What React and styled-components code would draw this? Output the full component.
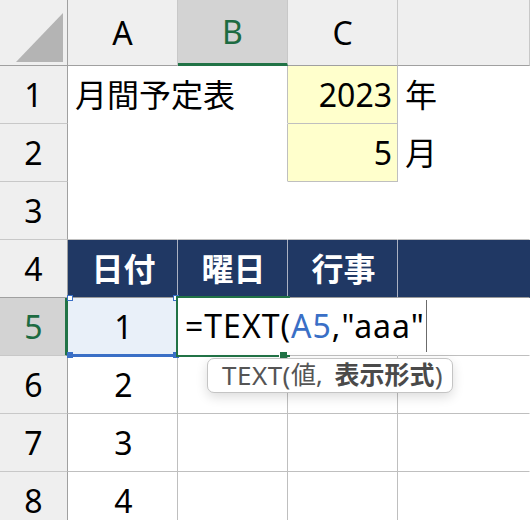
import React from 'react'
import styled, { createGlobalStyle } from 'styled-components'

const GREEN = '#217346'
const NAVY = '#203864'
const GRID = '#bfbfbf'
const HEAD_EDGE = '#a0a0a0'
const HEAD_LINE = '#c8c8c8'
const BLUE = '#3a6fc6'

const GlobalStyle = createGlobalStyle`
  html, body {
    margin: 0;
    padding: 0;
    background: #fff;
    overflow: hidden;
  }
  body {
    font-family: "Noto Sans", "Noto Sans CJK JP", sans-serif;
    color: #000;
  }
`

const Sheet = styled.div`
  display: grid;
  grid-template-columns: 68px 110px 110px 110px 1fr;
  grid-template-rows: 66px;
  grid-auto-rows: 58px;
  width: 530px;
  height: 520px;
  overflow: hidden;
`

const Corner = styled.div`
  background: #efefef;
  border-right: 1px solid ${HEAD_EDGE};
  border-bottom: 1px solid ${HEAD_EDGE};

  svg {
    display: block;
  }
`

const ColHead = styled.div`
  display: flex;
  align-items: center;
  justify-content: center;
  font-size: 32px;
  line-height: 1;
  padding-top: ${p => (p.$selected ? '1px' : '0')};
  background: ${p => (p.$selected ? '#d3d3d3' : '#efefef')};
  color: ${p => (p.$selected ? '#1d6b41' : '#000')};
  border-right: 1px solid ${HEAD_LINE};
  border-bottom: ${p => (p.$selected ? `3px solid ${GREEN}` : `1px solid ${HEAD_EDGE}`)};
`

const RowHead = styled.div`
  display: flex;
  align-items: center;
  justify-content: center;
  font-size: 32px;
  line-height: 1;
  padding-left: ${p => (p.$selected ? '2px' : '0')};
  background: ${p => (p.$selected ? '#d3d3d3' : '#efefef')};
  color: ${p => (p.$selected ? '#1d6b41' : '#000')};
  border-right: ${p => (p.$selected ? `3px solid ${GREEN}` : `1px solid ${HEAD_EDGE}`)};
  border-bottom: 1px solid ${p => p.$edge || HEAD_LINE};
`

const Cell = styled.div`
  display: flex;
  align-items: center;
  justify-content: ${p =>
    p.$align === 'right' ? 'flex-end' : p.$align === 'center' ? 'center' : 'flex-start'};
  padding: 0 5px 0 7px;
  font-size: 32px;
  line-height: 1;
  white-space: nowrap;
  background: ${p => p.$bg || 'transparent'};
  color: ${p => p.$color || '#000'};
  font-weight: ${p => (p.$bold ? 700 : 400)};
  border-right: 1px solid ${p => p.$r || 'transparent'};
  border-bottom: 1px solid ${p => p.$b || 'transparent'};
`

const RangeCell = styled(Cell)`
  position: relative;
  z-index: 1;
`

const RangeLine = styled.div`
  position: absolute;
  left: 0;
  right: 0;
  bottom: -2px;
  height: 3px;
  background: ${BLUE};
`

const Handle = styled.span`
  position: absolute;
  width: 4px;
  height: 4px;
  background: ${p => (p.$filled ? BLUE : '#fff')};
  border: 1px solid ${BLUE};
  ${p => (p.$top ? 'top: -3px;' : 'bottom: -3px;')}
  ${p => (p.$left ? 'left: -1px;' : 'right: -2px;')}
`

const EditCell = styled(Cell)`
  position: relative;
  z-index: 2;
  overflow: visible;
  background: #fff;
  padding-left: 7px;
  letter-spacing: 1px;
`

const ActiveBox = styled.div`
  position: absolute;
  left: -2px;
  top: -2px;
  right: -3px;
  bottom: -2px;
  border-top: 2px solid ${GREEN};
  border-left: 2px solid ${GREEN};
  border-bottom: 2px solid ${GREEN};
  pointer-events: none;
`

const FillHandle = styled.span`
  position: absolute;
  right: 0;
  bottom: -3px;
  width: 7px;
  height: 6px;
  background: ${GREEN};
  border-left: 1px solid #fff;
`

const Caret = styled.span`
  display: inline-block;
  width: 1px;
  height: 52px;
  margin-left: 1px;
  background: #6b6b6b;
  vertical-align: middle;
`

const Formula = styled.span`
  display: flex;
  align-items: center;
  margin-top: -2px;
`

const Ref = styled.span`
  color: ${BLUE};
`

const Tip = styled.div`
  position: absolute;
  left: 29px;
  top: 60px;
  width: 246px;
  height: 35px;
  box-sizing: border-box;
  display: flex;
  align-items: center;
  padding: 0 0 2px 14px;
  background: #fff;
  border: 1px solid #c4c4c4;
  border-radius: 7px;
  box-shadow: 0 4px 12px rgba(0, 0, 0, 0.14);
  font-size: 25px;
  letter-spacing: 0;
  color: #555;
`

const TipName = styled.span`
  font-size: 26px;
  letter-spacing: 0.5px;
`

const TipBold = styled.b`
  font-weight: 700;
  color: #4a4a4a;
  margin-left: 12px;
`

const yellow = '#ffffcc'

const rows = [
  {
    num: 1,
    cells: [
      { text: '月間予定表' },
      { r: GRID },
      { text: '2023', align: 'right', bg: yellow, r: GRID, b: GRID },
      { text: '年' },
    ],
  },
  {
    num: 2,
    cells: [
      {},
      { r: GRID },
      { text: '5', align: 'right', bg: yellow, r: GRID, b: GRID },
      { text: '月' },
    ],
  },
  {
    num: 3,
    cells: [{ b: GRID }, { b: GRID }, { b: GRID }, { b: GRID }],
  },
  {
    num: 4,
    edge: HEAD_EDGE,
    cells: ['日付', '曜日', '行事', ''].map((t, i) => ({
      text: t,
      align: 'center',
      bg: NAVY,
      color: '#fff',
      bold: true,
      r: i < 3 ? '#aab1c2' : undefined,
      b: '#9a9a9a',
    })),
  },
]

const tableRows = [6, 7, 8].map(n => ({
  num: n,
  cells: [
    { text: String(n - 4), align: 'center', r: GRID, b: GRID },
    { r: GRID, b: GRID },
    { r: GRID, b: GRID },
    { b: GRID },
  ],
}))

const renderCell = (c, key) => (
  <Cell
    key={key}
    $align={c.align}
    $bg={c.bg}
    $r={c.r}
    $b={c.b}
    $color={c.color}
    $bold={c.bold}
  >
    {c.text}
  </Cell>
)

const App = () => {
  return (
    <>
      <GlobalStyle />
      <Sheet>
        {/* column headers */}
        <Corner>
          <svg width="67" height="65" viewBox="0 0 67 65">
            <polygon points="16,62 63,13 63,62" fill="#b4b4b4" />
          </svg>
        </Corner>
        <ColHead>A</ColHead>
        <ColHead $selected>B</ColHead>
        <ColHead>C</ColHead>
        <ColHead />

        {rows.map(row => (
          <React.Fragment key={row.num}>
            <RowHead $edge={row.edge}>{row.num}</RowHead>
            {row.cells.map((c, i) => renderCell(c, row.num + '-' + i))}
          </React.Fragment>
        ))}

        {/* row 5: editing */}
        <RowHead $selected>5</RowHead>
        <RangeCell $align="center" $bg="#e9f0f9" $b={GRID}>
          1
          <RangeLine />
          <Handle $top $left />
          <Handle $top />
          <Handle $left $filled />
          <Handle $filled />
        </RangeCell>
        <EditCell $b={GRID}>
          <Formula>
            =TEXT(<Ref>A5</Ref>,"aaa"
            <Caret />
          </Formula>
          <ActiveBox />
          <FillHandle />
          <Tip>
            <TipName>TEXT(</TipName>値,<TipBold>表示形式</TipBold>
            <TipName>)</TipName>
          </Tip>
        </EditCell>
        <Cell $b={GRID} />
        <Cell $b={GRID} />

        {tableRows.map(row => (
          <React.Fragment key={row.num}>
            <RowHead>{row.num}</RowHead>
            {row.cells.map((c, i) => renderCell(c, row.num + '-' + i))}
          </React.Fragment>
        ))}
      </Sheet>
    </>
  )
}

export default App
